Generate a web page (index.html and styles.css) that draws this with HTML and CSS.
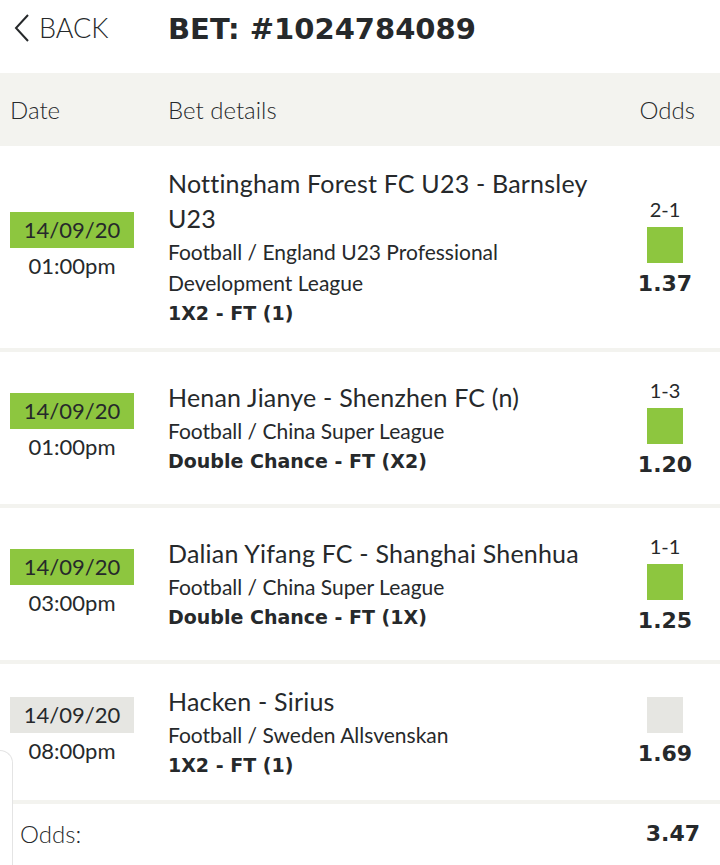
FILE: index.html
```html
<!DOCTYPE html>
<html lang="en">
<head>
    <meta charset="UTF-8">
    <meta name="viewport" content="width=device-width, initial-scale=1.0">
    <title>Bet #1024784089</title>
    <link rel="stylesheet" href="styles.css">
</head>
<body>
    <header class="topbar">
        <a class="back" href="#">
            <svg class="back-icon" width="16" height="28" viewBox="0 0 16 28"><path d="M14 1 L2 14 L14 27" fill="none" stroke="#26292b" stroke-width="2"/></svg>
            <span>BACK</span>
        </a>
        <h1>BET: #1024784089</h1>
    </header>

    <div class="table-head">
        <div class="col-date">Date</div>
        <div class="col-details">Bet details</div>
        <div class="col-odds">Odds</div>
    </div>

    <div class="row">
        <div class="col-date">
            <div class="date won">14/09/20</div>
            <div class="time">01:00pm</div>
        </div>
        <div class="col-details">
            <div class="match">Nottingham Forest FC U23 - Barnsley U23</div>
            <div class="league">Football / England U23 Professional Development League</div>
            <div class="market">1X2 - FT (1)</div>
        </div>
        <div class="col-odds">
            <div class="score">2-1</div>
            <div class="status won"></div>
            <div class="price">1.37</div>
        </div>
    </div>

    <div class="row">
        <div class="col-date">
            <div class="date won">14/09/20</div>
            <div class="time">01:00pm</div>
        </div>
        <div class="col-details">
            <div class="match">Henan Jianye - Shenzhen FC (n)</div>
            <div class="league">Football / China Super League</div>
            <div class="market">Double Chance - FT (X2)</div>
        </div>
        <div class="col-odds">
            <div class="score">1-3</div>
            <div class="status won"></div>
            <div class="price">1.20</div>
        </div>
    </div>

    <div class="row">
        <div class="col-date">
            <div class="date won">14/09/20</div>
            <div class="time">03:00pm</div>
        </div>
        <div class="col-details">
            <div class="match">Dalian Yifang FC - Shanghai Shenhua</div>
            <div class="league">Football / China Super League</div>
            <div class="market">Double Chance - FT (1X)</div>
        </div>
        <div class="col-odds">
            <div class="score">1-1</div>
            <div class="status won"></div>
            <div class="price">1.25</div>
        </div>
    </div>

    <div class="row">
        <div class="col-date">
            <div class="date">14/09/20</div>
            <div class="time">08:00pm</div>
        </div>
        <div class="col-details">
            <div class="match">Hacken - Sirius</div>
            <div class="league">Football / Sweden Allsvenskan</div>
            <div class="market">1X2 - FT (1)</div>
        </div>
        <div class="col-odds">
            <div class="status"></div>
            <div class="price">1.69</div>
        </div>
    </div>

    <div class="total">
        <span>Odds:</span>
        <span class="total-value">3.47</span>
    </div>

    <div class="side-panel"></div>
</body>
</html>
```

FILE: styles.css
```css
* {
    box-sizing: border-box;
}
body {
    margin: 0;
    font-family: Lato, "Liberation Sans", sans-serif;
    color: #26292b;
    background: #fff;
    position: relative;
    height: 865px;
    overflow: hidden;
}
.topbar {
    display: flex;
    align-items: center;
    height: 73px;
    padding-left: 14px;
}
.back {
    display: flex;
    align-items: center;
    gap: 9px;
    width: 154px;
    color: #26292b;
    text-decoration: none;
    font-size: 27px;
    font-weight: 300;
    margin-top: -18px;
}
.topbar h1 {
    margin: -16px 0 0 0;
    font-family: "DejaVu Sans", Lato, sans-serif;
    font-size: 29px;
    font-weight: 700;
}
.table-head {
    display: flex;
    align-items: center;
    height: 73px;
    background: #f3f3ef;
    font-size: 24px;
    font-weight: 300;
}
.table-head .col-date {
    text-align: left;
}
.col-date {
    width: 124px;
    margin-left: 10px;
    margin-right: 34px;
    text-align: center;
}
.col-details {
    width: 452px;
}
.col-odds {
    width: 70px;
    margin-left: 10px;
    text-align: center;
}
.table-head .col-odds {
    text-align: right;
    padding-right: 5px;
}
.row {
    display: flex;
    align-items: center;
    padding: 20px 0 19px;
    border-bottom: 4px solid #f3f3ef;
}
.date {
    height: 36px;
    line-height: 36px;
    font-size: 22px;
    background: #e6e6e2;
}
.date.won {
    background: #8dc63f;
}
.time {
    font-size: 22px;
    line-height: 36px;
}
.match {
    font-size: 25px;
    line-height: 35px;
    letter-spacing: 0.2px;
}
.league {
    font-size: 21px;
    line-height: 31px;
}
.market {
    font-family: "DejaVu Sans", Lato, sans-serif;
    font-size: 19px;
    line-height: 31px;
    font-weight: 700;
}
.row .col-odds {
    display: flex;
    flex-direction: column;
    align-items: center;
    padding-top: 3px;
}
.score {
    font-size: 20px;
    line-height: 30px;
}
.status {
    width: 36px;
    height: 36px;
    margin-top: 3px;
    background: #e6e6e2;
}
.status.won {
    background: #8dc63f;
}
.price {
    font-family: "DejaVu Sans", Lato, sans-serif;
    font-size: 22px;
    line-height: 41px;
    font-weight: 700;
}
.total {
    display: flex;
    justify-content: space-between;
    align-items: center;
    height: 58px;
    padding: 0 20px;
    font-size: 24px;
    font-weight: 300;
}
.total-value {
    font-family: "DejaVu Sans", Lato, sans-serif;
    font-weight: 700;
    font-size: 22px;
}
.side-panel {
    position: absolute;
    left: 0;
    top: 750px;
    width: 13px;
    height: 115px;
    border-top-right-radius: 14px;
    border-top: 1px solid #e4e4e4;
    border-right: 1px solid #e4e4e4;
    background: #fff;
}
```
